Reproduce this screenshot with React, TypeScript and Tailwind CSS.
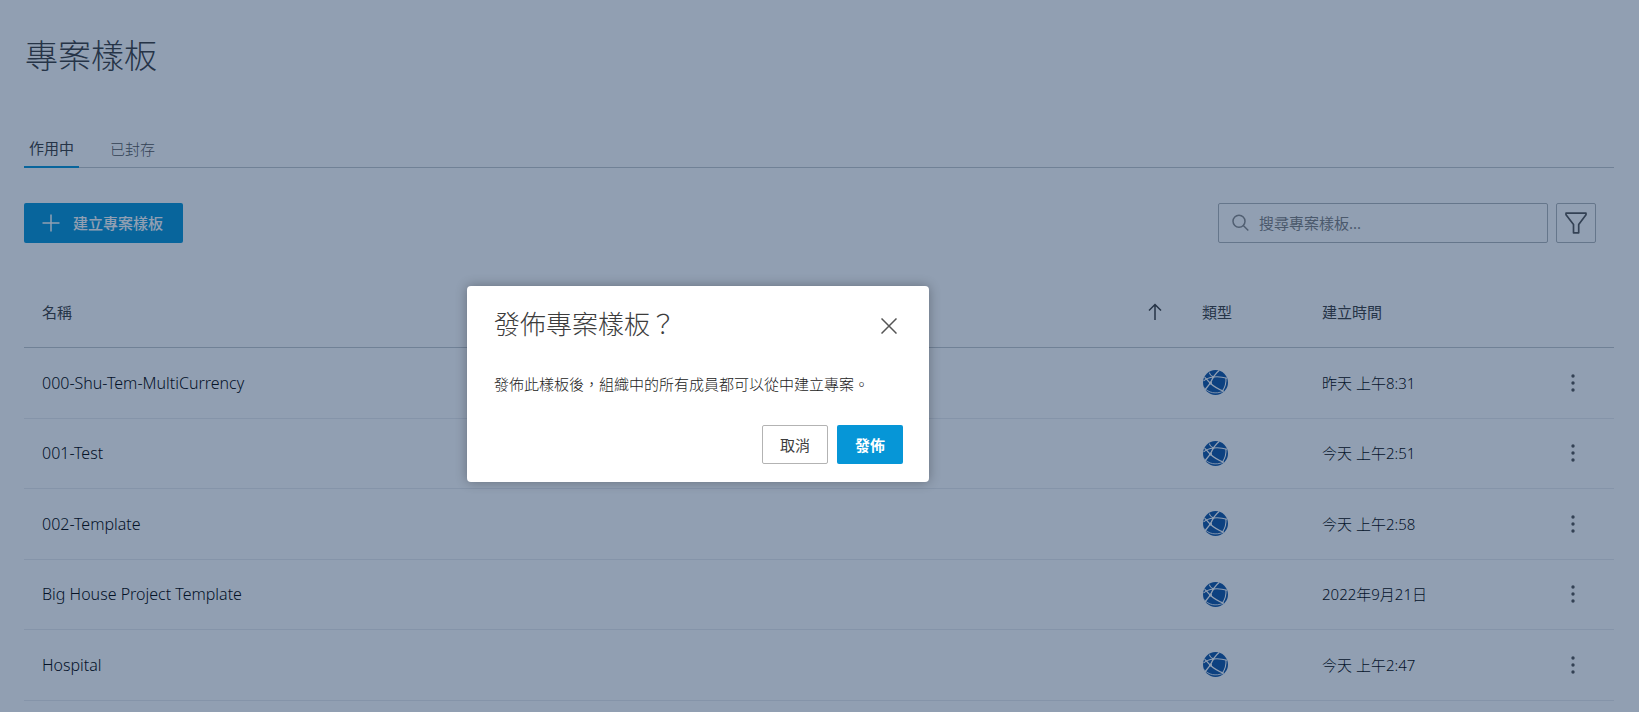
import React from "react";

type Template = { name: string; created: string };

const templates: Template[] = [
  { name: "000-Shu-Tem-MultiCurrency", created: "昨天 上午8:31" },
  { name: "001-Test", created: "今天 上午2:51" },
  { name: "002-Template", created: "今天 上午2:58" },
  { name: "Big House Project Template", created: "2022年9月21日" },
  { name: "Hospital", created: "今天 上午2:47" },
];

function GlobeIcon() {
  return (
    <svg viewBox="0 0 24 24" className="ml-px size-[25px]" role="img" aria-label="專案">
      <circle cx="12" cy="12" r="12" fill="#1055a5" />
      <g fill="none" stroke="#fff" strokeWidth="1">
        <path d="M.5 10.500C5 6.500 14 5 23 8" />
        <path d="M15.500.5C11 4 9 8 7 12.700C5 15.500 3 17.500 2 19" strokeWidth="1.200" />
        <path d="M1.500 7C4 9 5 11 7 12.700C11 16.500 14 18 20 20.500" strokeWidth="1.200" />
        <path d="M22 7.500C22.500 12.500 21 17 18.500 20.500" />
        <path d="M6 2.500C6.500 4 7.500 5.500 9.500 6.500" />
        <path d="M1 17C5.500 22 12 23.300 19.500 20.500" strokeWidth=".8" />
      </g>
      <circle cx="7.200" cy="12.500" r="1.500" fill="#fff" />
      <circle cx="9.800" cy="6.700" r="1.100" fill="#fff" />
    </svg>
  );
}

export default function App() {
  return (
    <div className="relative min-h-screen overflow-hidden bg-white font-['Noto_Sans','Noto_Sans_CJK_TC',sans-serif] text-[15px] leading-6 text-[#3c3c3c]">
      <main className="pt-[30px] pr-[25px] pl-6">
        <h1 className="pl-px font-['Noto_Sans_CJK_TC',sans-serif] text-[33px] leading-12 font-light">專案樣板</h1>

        <div role="tablist" className="mt-[54px] flex gap-[26px] border-b border-[#c4c8cc]">
          <button role="tab" aria-selected="true" className="-mb-px border-b-2 border-[#0696d7] px-[5px] pt-1 pb-1.5">
            作用中
          </button>
          <button role="tab" aria-selected="false" className="px-[5px] pt-1 pb-1.5 font-light text-[#555]">
            已封存
          </button>
        </div>

        <div className="mt-[35px] flex items-center justify-between pr-4.5">
          <button className="flex h-10 items-center gap-[13px] rounded-xs bg-[#0696d7] pr-5 pl-4.5 font-medium text-white">
            <svg viewBox="0 0 18 18" className="size-[18px]" fill="none" stroke="currentColor" strokeWidth="1.500" aria-hidden="true">
              <path d="M9 .5v17M.5 9h17" />
            </svg>
            建立專案樣板
          </button>
          <div className="flex gap-2">
            <div className="flex h-10 w-[330px] items-center gap-2.5 rounded-xs border border-[#b0b4b8] px-3">
              <svg viewBox="0 0 18 18" className="size-[18px] text-[#8a8a8a]" fill="none" stroke="currentColor" strokeWidth="1.500" aria-hidden="true">
                <circle cx="8" cy="7.200" r="6" />
                <path d="M12.300 11.500l5 5" />
              </svg>
              <input
                type="text"
                aria-label="搜尋專案樣板"
                placeholder="搜尋專案樣板..."
                className="min-w-0 grow bg-transparent outline-none placeholder:text-[#808080]"
              />
            </div>
            <button aria-label="篩選" className="flex size-10 items-center justify-center rounded-xs border border-[#b0b4b8] text-[#555]">
              <svg viewBox="0 0 22 22" className="size-[22px]" fill="none" stroke="currentColor" strokeWidth="1.700" strokeLinejoin="round" aria-hidden="true">
                <path d="M1 1.200h20v1.600l-7.300 9.700v8.300H8.500v-8.300L1 2.800z" />
              </svg>
            </button>
          </div>
        </div>

        <table className="mt-[34px] w-full table-fixed text-left">
          <colgroup>
            <col />
            <col className="w-[120px]" />
            <col className="w-[233px]" />
            <col className="w-[77px]" />
          </colgroup>
          <thead>
            <tr className="h-[70px] border-b border-[#c4c8cc]">
              <th className="px-4.5 font-normal">
                <div className="flex items-center justify-between pr-0.5">
                  名稱
                  <svg viewBox="0 0 18 18" className="size-[18px]" fill="none" stroke="currentColor" strokeWidth="1.500" aria-hidden="true">
                    <path d="M9 17V1.800M3 7.500l6-6 6 6" />
                  </svg>
                </div>
              </th>
              <th className="px-4.5 font-normal">類型</th>
              <th className="px-4.5 font-normal">建立時間</th>
              <th aria-label="動作" />
            </tr>
          </thead>
          <tbody>
            {templates.map((t) => (
              <tr key={t.name} className="h-[70px] border-b border-[#eaecee] odd:h-[71px]">
                <td className="px-4.5 text-base font-light text-black">{t.name}</td>
                <td className="px-4.5">
                  <GlobeIcon />
                </td>
                <td className="px-4.5 font-light text-black">{t.created}</td>
                <td>
                  <button aria-label="更多" className="ml-6 flex size-6 items-center justify-center text-[#555]">
                    <svg viewBox="0 0 4 18" className="h-[18px] w-1" fill="currentColor" aria-hidden="true">
                      <circle cx="2" cy="2" r="1.700" />
                      <circle cx="2" cy="9" r="1.700" />
                      <circle cx="2" cy="16" r="1.700" />
                    </svg>
                  </button>
                </td>
              </tr>
            ))}
          </tbody>
        </table>
      </main>

      <div className="absolute inset-0 flex items-start justify-center bg-[#0a2a55]/45 pt-[286px] pr-[243px]">
        <section role="dialog" aria-modal="true" aria-labelledby="publish-title" className="w-[462px] rounded-sm bg-white pt-5 pr-[26px] pb-4.5 pl-[27px] shadow-[0_0_12px_rgba(0,0,0,0.3)]">
          <div className="flex items-center justify-between">
            <h2 id="publish-title" className="text-[26px] leading-9 font-light">
              發佈專案樣板？
            </h2>
            <button aria-label="關閉" className="mt-1 flex size-7 items-center justify-center text-[#555]">
              <svg viewBox="0 0 16 16" className="size-4" fill="none" stroke="currentColor" strokeWidth="1.500" aria-hidden="true">
                <path d="M.5.5l15 15M15.500.5l-15 15" />
              </svg>
            </button>
          </div>
          <p className="mt-[30px] font-light text-[#222]">發佈此樣板後，組織中的所有成員都可以從中建立專案。</p>
          <div className="mt-[29px] flex justify-end gap-[9px]">
            <button className="h-[39px] rounded-xs border border-[#b3b3b3] px-[17px]">取消</button>
            <button className="h-[39px] rounded-xs bg-[#0696d7] px-[18px] font-bold text-white">發佈</button>
          </div>
        </section>
      </div>
    </div>
  );
}
